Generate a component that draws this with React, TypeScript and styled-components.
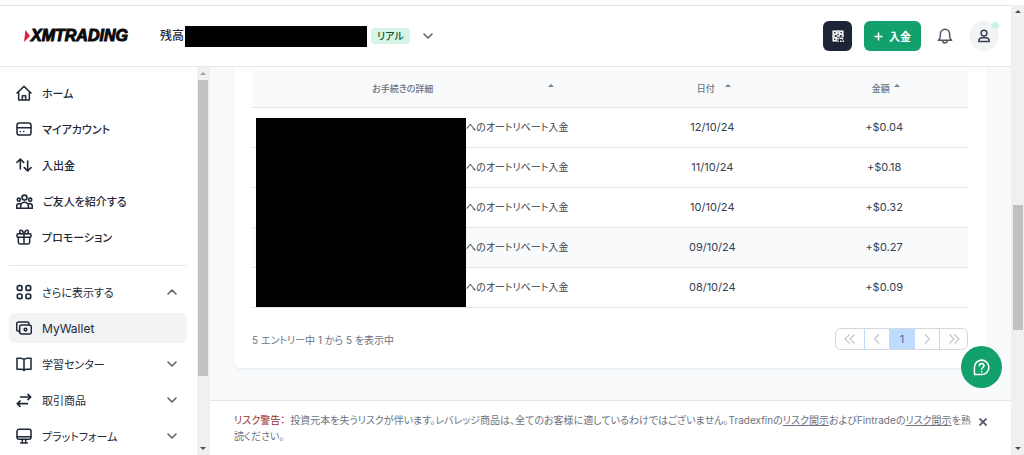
import React from "react";
import styled, { createGlobalStyle, css } from "styled-components";

const font = `Inter, "Noto Sans CJK JP", sans-serif`;

const GlobalStyle = createGlobalStyle`
  * { box-sizing: border-box; }
  html, body { margin: 0; padding: 0; }
  body {
    background: #fff;
    color: #1f2937;
    font-family: ${font};
    font-size: 12px;
    font-feature-settings: "palt";
    overflow: hidden;
  }
  button { font: inherit; font-feature-settings: inherit; color: inherit; background: none; border: 0; padding: 0; cursor: pointer; }
  a { color: inherit; text-decoration: none; }
  svg { display: block; flex: none; }
`;

const Page = styled.div`
  display: flex;
  height: 100vh;
  padding-top: 5px;
`;

const Shell = styled.div`
  flex: 1;
  min-width: 0;
  display: flex;
  flex-direction: column;
  border-top: 1px solid #e3e3e5;
`;

const Header = styled.header`
  flex: none;
  display: flex;
  align-items: center;
  height: 61px;
  padding: 0 12px 0 24px;
  border-bottom: 1px solid #e5e7eb;
`;

const Logo = styled.a`
  display: flex;
  align-items: center;
  gap: 1px;
  width: 136px;
  color: #0a0a0a;
  font-family: "Liberation Sans", Arial, sans-serif;
  font-size: 16px;
  font-weight: 700;
  font-style: italic;
  line-height: 20px;
  -webkit-text-stroke: 1px #0a0a0a;
`;

const Balance = styled.div`
  display: flex;
  align-items: center;
  font-weight: 500;
  line-height: 20px;
`;

const BalanceMask = styled.span`
  width: 182px;
  height: 21px;
  margin: 0 4px 0 1px;
  background: #000;
`;

const Badge = styled.span`
  padding: 0 6px;
  border-radius: 4px;
  background: #d5f5e6;
  color: #14532d;
  font-size: 10px;
  font-weight: 500;
  line-height: 16px;
`;

const AccountToggle = styled.button`
  display: flex;
  margin-left: 13px;
`;

const Actions = styled.div`
  display: flex;
  align-items: center;
  margin-left: auto;
`;

const QrButton = styled.button`
  display: flex;
  align-items: center;
  justify-content: center;
  width: 29px;
  height: 30px;
  border-radius: 6px;
  background: #1b2536;
  color: #fff;
`;

const DepositButton = styled.button`
  display: flex;
  align-items: center;
  justify-content: center;
  gap: 6px;
  width: 57px;
  height: 30px;
  margin: 0 16px 0 12px;
  border-radius: 6px;
  background: #12a06c;
  color: #fff;
  font-size: 11px;
  font-weight: 600;
`;

const IconButton = styled.button`
  display: flex;
  color: #4b5563;
`;

const Avatar = styled.button`
  position: relative;
  display: flex;
  align-items: center;
  justify-content: center;
  width: 30px;
  height: 30px;
  margin-left: 16px;
  border-radius: 50%;
  background: #f1f3f5;
  color: #374151;
`;

const StatusDot = styled.span`
  position: absolute;
  top: 1px;
  right: 0;
  width: 7px;
  height: 7px;
  border-radius: 50%;
  background: #c9f5e0;
`;

const Body = styled.div`
  flex: 1;
  min-height: 0;
  display: flex;
`;

const Sidebar = styled.aside`
  flex: none;
  display: flex;
  width: 210px;
  border-right: 1px solid #eceef1;
`;

const Nav = styled.nav`
  flex: 1;
  padding: 11px 10px 0 9px;
  overflow: hidden;
`;

const NavGroup = styled.ul<{ $strong?: boolean }>`
  display: flex;
  flex-direction: column;
  gap: 6px;
  margin: 0;
  padding: 0;
  list-style: none;
  font-weight: ${(p) => (p.$strong ? 500 : 400)};
`;

const NavDivider = styled.hr`
  height: 1px;
  margin: 13px 0 11px;
  border: 0;
  background: #e5e7eb;
`;

const navItem = css<{ $active?: boolean }>`
  display: flex;
  align-items: center;
  gap: 10px;
  width: 100%;
  height: 30px;
  padding: 0 10px 0 7px;
  border-radius: 6px;
  background: ${(p) => (p.$active ? "#f1f3f5" : "transparent")};
  color: #1f2937;
  text-align: left;
`;

const NavLink = styled.a<{ $active?: boolean }>`${navItem}`;
const NavToggle = styled.button<{ $active?: boolean }>`${navItem}`;

const NavLabel = styled.span<{ $latin?: boolean }>`
  flex: 1;
  font-size: ${(p) => (p.$latin ? 12 : 11)}px;
  white-space: nowrap;
`;

const Track = styled.div<{ $wide?: boolean }>`
  flex: none;
  display: flex;
  flex-direction: column;
  align-items: center;
  width: ${(p) => (p.$wide ? 13 : 12)}px;
  background: #f0f0f1;
`;

const TrackArrow = styled.span<{ $down?: boolean; $muted?: boolean }>`
  display: flex;
  align-items: center;
  justify-content: center;
  height: 13px;
  color: ${(p) => (p.$muted ? "#a3a3a3" : "#505050")};

  &::before {
    content: "";
    border: 3px solid transparent;
    border-top-width: ${(p) => (p.$down ? 3 : 0)}px;
    border-bottom-width: ${(p) => (p.$down ? 0 : 3)}px;
    border-top-color: currentColor;
    border-bottom-color: currentColor;
  }
`;

const TrackSpace = styled.span<{ $grow: number }>`
  flex: ${(p) => p.$grow} 1 0;
`;

const Thumb = styled.span<{ $grow: number }>`
  flex: ${(p) => p.$grow} 1 0;
  width: 10px;
  background: #c1c1c1;
`;

const Main = styled.div`
  flex: 1;
  min-width: 0;
  display: flex;
  flex-direction: column;
  background: #f8fafc;
`;

const Content = styled.main`
  flex: 1;
  min-height: 0;
  padding: 0 24px 32px;
  overflow: hidden;
`;

const Card = styled.section`
  padding: 4px 19px 18px 18px;
  border-radius: 0 0 6px 6px;
  background: #fff;
  box-shadow: 0 1px 2px #e4e8f0;
`;

const TableWrap = styled.div`
  position: relative;
`;

const Table = styled.table`
  width: 100%;
  table-layout: fixed;
  border-collapse: separate;
  border-spacing: 0;
`;

const HeadCell = styled.th<{ $width: string }>`
  width: ${(p) => p.$width};
  height: 37px;
  padding: 0;
  border-bottom: 1px solid #e5e7eb;
  background: #f8fafc;
`;

const SortButton = styled.button<{ $spread?: boolean; $gap: number }>`
  display: flex;
  align-items: center;
  justify-content: center;
  gap: ${(p) => p.$gap}px;
  width: ${(p) => (p.$spread ? "81%" : "100%")};
  padding-left: ${(p) => (p.$spread ? 6 : 0)}px;
  color: #6b7280;
  font-size: 9px;
  font-weight: 500;
  line-height: 16px;
`;

const SortLabel = styled.span<{ $spread?: boolean }>`
  flex: ${(p) => (p.$spread ? "1" : "none")};
`;

const SortMark = styled.span`
  margin-bottom: 8px;
  border: 3px solid transparent;
  border-top-width: 0;
  border-bottom-color: #7b828e;
`;

const Row = styled.tr<{ $shaded?: boolean }>`
  background: ${(p) => (p.$shaded ? "#f8fafc" : "#fff")};
`;

const Cell = styled.td<{ $detail?: boolean }>`
  height: 40px;
  padding: ${(p) => (p.$detail ? "0 0 2px 214px" : "0 3px 2px 0")};
  border-bottom: 1px solid #e5e7eb;
  color: #374151;
  font-size: ${(p) => (p.$detail ? 10 : 11)}px;
  text-align: ${(p) => (p.$detail ? "left" : "center")};
  white-space: nowrap;
`;

const DetailMask = styled.div`
  position: absolute;
  top: 47px;
  bottom: 1px;
  left: 4px;
  width: 210px;
  background: #000;
`;

const TableFooter = styled.div`
  display: flex;
  align-items: center;
  justify-content: space-between;
  margin-top: 20px;
  color: #6b7280;
  font-size: 10px;
`;

const Pager = styled.nav`
  display: flex;
  height: 22px;
  border: 1px solid #d5d9df;
  border-radius: 6px;
  font-size: 11px;
  overflow: hidden;
`;

const PageButton = styled.button<{ $edge?: boolean; $current?: boolean }>`
  display: flex;
  align-items: center;
  justify-content: center;
  width: ${(p) => (p.$edge ? 28 : 25)}px;
  background: ${(p) => (p.$current ? "#bfdbfe" : "transparent")};
  color: ${(p) => (p.$current ? "#4468b0" : "#c3c7cd")};

  & + & {
    border-left: 1px solid ${(p) => (p.$current ? "#bfdbfe" : "#d5d9df")};
  }
`;

const RiskBar = styled.footer`
  flex: none;
  display: flex;
  align-items: flex-start;
  min-height: 55px;
  padding: 11px 24px 0 24px;
  border-top: 1px solid #e5e7eb;
  background: #fff;
  color: #6b7280;
  font-size: 10px;
  line-height: 16px;
`;

const RiskText = styled.p`
  flex: 1;
  margin: 0;
`;

const RiskTitle = styled.strong`
  margin-right: 5px;
  color: #9b2c2c;
  font-weight: 400;
`;

const RiskLink = styled.a`
  text-decoration: underline;
`;

const CloseButton = styled.button`
  margin: 6px 0 0 3px;
  color: #4b5563;
`;

const ChatButton = styled.button`
  position: fixed;
  right: 22px;
  bottom: 67px;
  display: flex;
  align-items: center;
  justify-content: center;
  width: 41px;
  height: 42px;
  border-radius: 50%;
  background: #12a06c;
  color: #fff;
`;

type IconProps = { size?: number; width?: number; children: React.ReactNode };

const Icon = ({ size = 16, width = 2.3, children }: IconProps) => (
  <svg
    width={size}
    height={size}
    viewBox="0 0 24 24"
    fill="none"
    stroke="currentColor"
    strokeWidth={width}
    strokeLinecap="round"
    strokeLinejoin="round"
    aria-hidden="true"
  >
    {children}
  </svg>
);

const Chevron = ({ up }: { up?: boolean }) => (
  <svg width="10" height="10" viewBox="0 0 10 10" fill="none" stroke="#5c636e" strokeWidth="1.6" strokeLinecap="round" strokeLinejoin="round" aria-hidden="true">
    <path d={up ? "M1 7l4-4 4 4" : "M1 3l4 4 4-4"} />
  </svg>
);

const HomeIcon = () => (
  <Icon>
    <path d="M1.500 12L12 2l10.500 10M4 10v12.500h16V10M9.500 22v-6h5v6" />
  </Icon>
);

const CardIcon = () => (
  <Icon>
    <rect x="1.500" y="3" width="21" height="18" rx="3.500" />
    <path d="M1.500 10h21M6.500 15.800h.2M11.500 15.800h.2" />
  </Icon>
);

const TransferIcon = () => (
  <Icon width={2.4}>
    <path d="M6.500 18V3M1.500 8l5-5 5 5M17.500 6v15M12.500 16l5 5 5-5" />
  </Icon>
);

const FriendsIcon = () => (
  <Icon size={17}>
    <circle cx="12" cy="6.500" r="3.500" />
    <circle cx="4" cy="9.500" r="2.200" />
    <circle cx="20" cy="9.500" r="2.200" />
    <path d="M6.500 21.500v-3a5.500 5.500 0 0 1 11 0v3zM6.500 21.500H1v-3a3.500 3.500 0 0 1 5-3.200M17.500 21.500H23v-3a3.500 3.500 0 0 0-5-3.200" />
  </Icon>
);

const GiftIcon = () => (
  <Icon>
    <rect x="1.500" y="7" width="21" height="5.500" rx="1.500" />
    <path d="M3.500 12.500v7.500a2.500 2.500 0 0 0 2.500 2.500h12a2.500 2.500 0 0 0 2.500-2.500v-7.500M12 7v15.500M12 7C10 1 5.500.500 5.500 4c0 2 1.500 3 3 3M12 7c2-6 6.500-6.500 6.500-3 0 2-1.500 3-3 3" />
  </Icon>
);

const MoreIcon = () => (
  <Icon width={2.6}>
    <rect x="2" y="2.500" width="7" height="7" rx="2.500" />
    <rect x="15" y="2.500" width="7" height="7" rx="2.500" />
    <rect x="2" y="15" width="7" height="7" rx="2.500" />
    <rect x="15" y="15" width="7" height="7" rx="2.500" />
  </Icon>
);

const WalletIcon = () => (
  <Icon>
    <path d="M5.500 17H4a3 3 0 0 1-3-3V6a3 3 0 0 1 3-3h12.500a3 3 0 0 1 3 3v1.500" />
    <rect x="5.500" y="7.500" width="17.500" height="13.500" rx="3" />
    <circle cx="14.200" cy="14.300" r="2" />
  </Icon>
);

const BookIcon = () => (
  <Icon>
    <path d="M12 5.500C10.500 4 9 3.500 7 3.500H1.500v16.500H8c2 0 3 .500 4 1.500 1-1 2-1.500 4-1.500h6.500V3.500H17c-2 0-3.500.500-5 2zM12 5.500v15" />
  </Icon>
);

const SwapIcon = () => (
  <Icon width={2.600}>
    <path d="M7 7.500h15M18 3.500l4 4-4 4M17 17.500H2M6 13.500l-4 4 4 4" />
  </Icon>
);

const MonitorIcon = () => (
  <Icon>
    <rect x="1.500" y="2" width="21" height="15" rx="3" />
    <path d="M1.500 13h21M9.500 17v5M14.500 17v5M7 22.500h10" />
  </Icon>
);

const QrIcon = () => (
  <svg width="12" height="12" viewBox="0 0 12 12" fill="none" stroke="currentColor" strokeWidth="1.500" aria-hidden="true">
    <rect x="1.200" y="1.200" width="3" height="3" />
    <rect x="7.800" y="1.200" width="3" height="3" />
    <rect x="1.200" y="7.800" width="3" height="3" />
    <path d="M6 0v4.500M0 6h3M4.500 6H8M9.500 6H12M6 7.500v2M6 10.500V12M7.500 8.200h2M10.500 7.500v2M8 11.200h1.500M10.500 11.200H12" />
  </svg>
);

const BellIcon = () => (
  <Icon size={16} width={2.2}>
    <path d="M2 18.500h20c-2-1.500-3-3-3-6V9.500C19 5 16 2 12 2S5 5 5 9.500v3c0 3-1 4.500-3 6zM8.500 19a3.500 3.500 0 0 0 7 0" />
  </Icon>
);

const UserIcon = () => (
  <Icon size={14} width={2.500}>
    <circle cx="12" cy="7" r="5" />
    <path d="M3 21.500c0-4 2.500-6.500 6-6.500h6c3.500 0 6 2.500 6 6.500z" />
  </Icon>
);

const ChatIcon = () => (
  <Icon size={17} width={2.200}>
    <path d="M2 22V12a10.200 10.200 0 1 1 10.200 10z" />
    <path d="M9 9.500c0-4 6.500-4 6.500 0 0 2.500-3.200 2.500-3.200 5M12.300 17.700v.2" />
  </Icon>
);

const Arrows = ({ double, right }: { double?: boolean; right?: boolean }) => (
  <svg width="12" height="10" viewBox="0 0 12 10" fill="none" stroke="currentColor" strokeWidth="1.200" aria-hidden="true">
    {right ? (
      <path d={double ? "M1.500 .500L6 5 1.500 9.500M6.500 .500L11 5 6.500 9.500" : "M4 .500L8.500 5 4 9.500"} />
    ) : (
      <path d={double ? "M5.500 .500L1 5l4.500 4.500M10.500 .500L6 5l4.500 4.500" : "M8 .500L3.500 5 8 9.500"} />
    )}
  </svg>
);

const mainNav = [
  { label: "ホーム", icon: <HomeIcon /> },
  { label: "マイアカウント", icon: <CardIcon /> },
  { label: "入出金", icon: <TransferIcon /> },
  { label: "ご友人を紹介する", icon: <FriendsIcon /> },
  { label: "プロモーション", icon: <GiftIcon /> },
];

const moreNav = [
  { label: "学習センター", icon: <BookIcon /> },
  { label: "取引商品", icon: <SwapIcon /> },
  { label: "プラットフォーム", icon: <MonitorIcon /> },
];

const rows = [
  { date: "12/10/24", amount: "+$0.04" },
  { date: "11/10/24", amount: "+$0.18" },
  { date: "10/10/24", amount: "+$0.32" },
  { date: "09/10/24", amount: "+$0.27", shaded: true },
  { date: "08/10/24", amount: "+$0.09" },
];

type ScrollProps = { before: number; thumb: number; after: number; wide?: boolean };

const ScrollTrack = ({ before, thumb, after, wide }: ScrollProps) => (
  <Track $wide={wide} aria-hidden="true">
    <TrackArrow $muted={before === 0} />
    <TrackSpace $grow={before} />
    <Thumb $grow={thumb} />
    <TrackSpace $grow={after} />
    <TrackArrow $down />
  </Track>
);

export default function App() {
  return (
    <>
      <GlobalStyle />
      <Page>
        <Shell>
          <Header>
            <Logo href="#">
              <svg width="6" height="12" viewBox="0 0 6 12" aria-hidden="true">
                <path d="M1.500 0L6 6 0 12z" fill="#e3203b" />
              </svg>
              XMTRADING
            </Logo>
            <Balance>
              残高
              <BalanceMask />
              <Badge>リアル</Badge>
              <AccountToggle aria-label="口座を選択">
                <Chevron />
              </AccountToggle>
            </Balance>
            <Actions>
              <QrButton aria-label="QRコード">
                <QrIcon />
              </QrButton>
              <DepositButton>
                <svg width="9" height="9" viewBox="0 0 9 9" stroke="currentColor" strokeWidth="1.500" aria-hidden="true">
                  <path d="M4.500 .500v8M.500 4.500h8" />
                </svg>
                入金
              </DepositButton>
              <IconButton aria-label="お知らせ">
                <BellIcon />
              </IconButton>
              <Avatar aria-label="プロフィール">
                <UserIcon />
                <StatusDot />
              </Avatar>
            </Actions>
          </Header>
          <Body>
            <Sidebar>
              <Nav>
                <NavGroup $strong>
                  {mainNav.map((item) => (
                    <li key={item.label}>
                      <NavLink href="#">
                        {item.icon}
                        <NavLabel>{item.label}</NavLabel>
                      </NavLink>
                    </li>
                  ))}
                </NavGroup>
                <NavDivider />
                <NavGroup>
                  <li>
                    <NavToggle aria-expanded="true">
                      <MoreIcon />
                      <NavLabel>さらに表示する</NavLabel>
                      <Chevron up />
                    </NavToggle>
                  </li>
                  <li>
                    <NavLink href="#" $active aria-current="page">
                      <WalletIcon />
                      <NavLabel $latin>MyWallet</NavLabel>
                    </NavLink>
                  </li>
                  {moreNav.map((item) => (
                    <li key={item.label}>
                      <NavToggle aria-expanded="false">
                        {item.icon}
                        <NavLabel>{item.label}</NavLabel>
                        <Chevron />
                      </NavToggle>
                    </li>
                  ))}
                </NavGroup>
              </Nav>
              <ScrollTrack before={0} thumb={297} after={66} />
            </Sidebar>
            <Main>
              <Content>
                <Card>
                  <TableWrap>
                    <Table>
                      <thead>
                        <tr>
                          <HeadCell $width="52%">
                            <SortButton $spread $gap={0}>
                              <SortLabel $spread>お手続きの詳細</SortLabel>
                              <SortMark />
                            </SortButton>
                          </HeadCell>
                          <HeadCell $width="25%">
                            <SortButton $gap={10}>
                              <SortLabel>日付</SortLabel>
                              <SortMark />
                            </SortButton>
                          </HeadCell>
                          <HeadCell $width="23%">
                            <SortButton $gap={4}>
                              <SortLabel>金額</SortLabel>
                              <SortMark />
                            </SortButton>
                          </HeadCell>
                        </tr>
                      </thead>
                      <tbody>
                        {rows.map((row) => (
                          <Row key={row.date} $shaded={row.shaded}>
                            <Cell $detail>へのオートリベート入金</Cell>
                            <Cell>{row.date}</Cell>
                            <Cell>{row.amount}</Cell>
                          </Row>
                        ))}
                      </tbody>
                    </Table>
                    <DetailMask />
                  </TableWrap>
                  <TableFooter>
                    <span>5 エントリー中 1 から 5 を表示中</span>
                    <Pager aria-label="ページ">
                      <PageButton $edge aria-label="最初">
                        <Arrows double />
                      </PageButton>
                      <PageButton aria-label="前へ">
                        <Arrows />
                      </PageButton>
                      <PageButton $current aria-current="page">
                        1
                      </PageButton>
                      <PageButton aria-label="次へ">
                        <Arrows right />
                      </PageButton>
                      <PageButton $edge aria-label="最後">
                        <Arrows double right />
                      </PageButton>
                    </Pager>
                  </TableFooter>
                </Card>
              </Content>
              <RiskBar>
                <RiskText>
                  <RiskTitle>リスク警告：</RiskTitle>
                  投資元本を失うリスクが伴います。レバレッジ商品は、全てのお客様に適しているわけではございません。Tradexfinの
                  <RiskLink href="#">リスク開示</RiskLink>およびFintradeの
                  <RiskLink href="#">リスク開示</RiskLink>を熟読ください。
                </RiskText>
                <CloseButton aria-label="閉じる">
                  <svg width="8" height="8" viewBox="0 0 8 8" stroke="currentColor" strokeWidth="1.700" aria-hidden="true">
                    <path d="M.500 .500l7 7M7.500 .500l-7 7" />
                  </svg>
                </CloseButton>
              </RiskBar>
            </Main>
          </Body>
        </Shell>
        <ScrollTrack wide before={187} thumb={124} after={112} />
        <ChatButton aria-label="ヘルプ">
          <ChatIcon />
        </ChatButton>
      </Page>
    </>
  );
}
